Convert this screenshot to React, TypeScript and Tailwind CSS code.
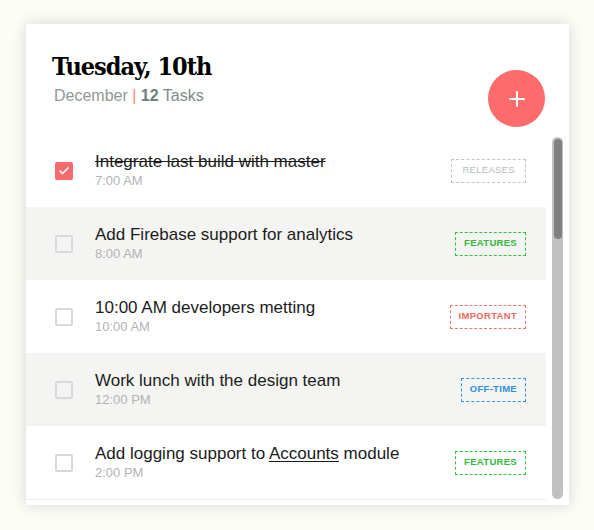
import { Check, Plus } from 'lucide-react';

type Task = {
  title: React.ReactNode;
  time: string;
  tag: string;
  tagClass: string;
  done?: boolean;
  shaded?: boolean;
};

const tasks: Task[] = [
  {
    title: 'Integrate last build with master',
    time: '7:00 AM',
    tag: 'Releases',
    tagClass: 'border-[#c4c4c4] text-[#b7bcbc] font-normal px-[10px]',
    done: true,
  },
  {
    title: 'Add Firebase support for analytics',
    time: '8:00 AM',
    tag: 'Features',
    tagClass: 'border-[#33c43a] text-[#33b83a] font-bold px-[8px]',
    shaded: true,
  },
  {
    title: '10:00 AM developers metting',
    time: '10:00 AM',
    tag: 'Important',
    tagClass: 'border-[#f3756a] text-[#f06a5f] font-bold px-[8px]',
  },
  {
    title: 'Work lunch with the design team',
    time: '12:00 PM',
    tag: 'Off-time',
    tagClass: 'border-[#2f95ea] text-[#2f8fe0] font-bold px-[8px]',
    shaded: true,
  },
  {
    title: (
      <>
        Add logging support to <span className="underline underline-offset-2">Accounts</span> module
      </>
    ),
    time: '2:00 PM',
    tag: 'Features',
    tagClass: 'border-[#33c43a] text-[#33b83a] font-bold px-[8px]',
  },
];

function TaskRow({ task }: { task: Task }) {
  return (
    <div
      className={`flex items-center h-[73px] pl-[29px] pr-[20px] ${
        task.shaded ? 'bg-[#f4f4f2]' : 'bg-white'
      }`}
    >
      {task.done ? (
        <div className="w-[18px] h-[18px] rounded-[2px] bg-[#f66b6d] flex items-center justify-center">
          <Check size={12} strokeWidth={3.5} className="text-white" />
        </div>
      ) : (
        <div className="w-[18px] h-[18px] rounded-[2px] border-2 border-[#d6d9de] bg-transparent" />
      )}
      <div className="ml-[22px] flex-1 flex flex-col">
        <div
          className={`text-[17px] leading-[20px] text-[#1c1c1c] ${
            task.done ? 'line-through decoration-[#1c1c1c]' : ''
          }`}
        >
          {task.title}
        </div>
        <div className="text-[13px] leading-[16px] mt-[1px] text-[#b3b3b3]">{task.time}</div>
      </div>
      <div
        className={`h-[24px] flex items-center border border-dashed text-[9.5px] uppercase tracking-[0.3px] ${task.tagClass}`}
      >
        {task.tag}
      </div>
    </div>
  );
}

export default function App() {
  return (
    <div
      className="w-[594px] h-[530px] bg-[#fdfdf8] pt-[24px] pl-[26px]"
      style={{ fontFamily: '"Liberation Sans", Arial, sans-serif' }}
    >
      <div className="w-[543px] h-[481px] bg-white shadow-[0_0_14px_rgba(0,0,0,0.16)] flex flex-col overflow-hidden">
        {/* Header */}
        <div className="h-[110px] flex items-start justify-between pl-[26px] pr-[24px] pt-[28px]">
          <div>
            <h1
              className="text-[25px] leading-[30px] font-bold text-black font-stretch-condensed"
              style={{ fontFamily: '"DejaVu Serif", "Liberation Serif", serif', letterSpacing: '-1px' }}
            >
              Tuesday, 10th
            </h1>
            <div className="mt-[2px] ml-[2px] text-[16px] text-[#929898]">
              December <span className="text-[#f08a80]">|</span>{' '}
              <span className="font-bold text-[#6f7f7f]">12</span>{' '}
              <span className="text-[#7f8b8b]">Tasks</span>
            </div>
          </div>
          <button className="mt-[18px] w-[57px] h-[57px] rounded-full bg-[#fd6b6d] flex items-center justify-center">
            <Plus size={24} strokeWidth={2} className="text-white" />
          </button>
        </div>

        {/* List */}
        <div className="flex flex-1 min-h-0">
          <div className="w-[520px] flex flex-col">
            {tasks.map((t, i) => (
              <TaskRow key={i} task={t} />
            ))}
            <div className="border-t border-[#ececec]" />
          </div>
          <div className="ml-[6px] mt-[3px] mb-[6px] w-[11px] rounded-full bg-[#c1c1c1] p-[1.5px]">
            <div className="h-[100px] rounded-full bg-[#808080]" />
          </div>
        </div>
      </div>
    </div>
  );
}
